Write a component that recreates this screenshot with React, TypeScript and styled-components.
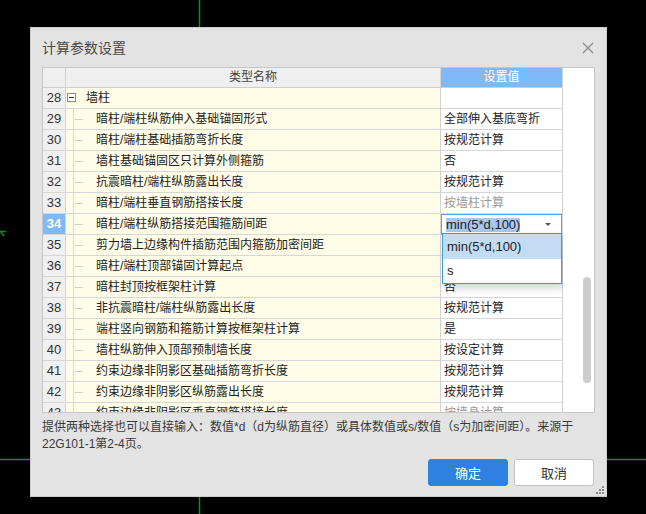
import React from "react";
import styled, { createGlobalStyle } from "styled-components";

const GlobalStyle = createGlobalStyle`
  html, body { margin: 0; padding: 0; background: #000; }
  body { font-family: "Liberation Sans", "Noto Sans CJK SC", sans-serif; }
`;

const FONT = `"Liberation Sans", "Noto Sans CJK SC", sans-serif`;

const Desktop = styled.div`
  position: relative;
  width: 646px;
  height: 514px;
  box-sizing: border-box;
  padding: 27px 0 0 30px;
  background: #000;
  overflow: hidden;
`;

const CanvasLines = styled.svg`
  position: absolute;
  left: 0;
  top: 0;
`;

const Dialog = styled.div`
  position: relative;
  width: 577px;
  height: 470px;
  box-sizing: border-box;
  background: #e3e3e3;
  border: 1px solid #cdcdcd;
  display: flex;
  flex-direction: column;
  padding: 0 12px 0 11px;
  font-family: ${FONT};
`;

const TitleBar = styled.div`
  height: 39px;
  display: flex;
  align-items: center;
  justify-content: space-between;
`;

const Title = styled.div`
  font-size: 14px;
  color: #4a4a4a;
  line-height: 20px;
`;

const CloseButton = styled.div`
  width: 12px;
  height: 12px;
  display: flex;
  align-items: center;
  justify-content: center;
`;

const Table = styled.div`
  width: 553px;
  height: 346px;
  box-sizing: border-box;
  border: 1px solid #c6c6c6;
  display: flex;
  background: #fff;
`;

const Grid = styled.div`
  width: 520px;
  display: flex;
  flex-direction: column;
`;

const HeaderRow = styled.div`
  display: flex;
  height: 20px;
  box-sizing: border-box;
  border-bottom: 1px solid #cfcfcf;
  font-size: 12px;
  line-height: 19px;
`;

const HeadCell = styled.div<{ $w: number; $accent?: boolean }>`
  width: ${(p) => p.$w}px;
  box-sizing: border-box;
  border-right: 1px solid #d2d2d2;
  background: ${(p) => (p.$accent ? "#80b9f7" : "#efefef")};
  color: ${(p) => (p.$accent ? "#ffffff" : "#444")};
  text-align: center;
`;

const Body = styled.div`
  flex: 1;
  overflow: hidden;
  position: relative;
`;

const Row = styled.div`
  display: flex;
  height: 21px;
  box-sizing: border-box;
  border-bottom: 1px solid #d6d6d6;
  font-size: 12px;
`;

const NumCell = styled.div<{ $active?: boolean }>`
  width: 23px;
  box-sizing: border-box;
  border-right: 1px solid #d2d2d2;
  background: ${(p) => (p.$active ? "#80b9f7" : "#f0f0f0")};
  color: ${(p) => (p.$active ? "#fff" : "#333")};
  font-weight: ${(p) => (p.$active ? "bold" : "normal")};
  font-size: 13px;
  line-height: 20px;
  text-align: center;
`;

const NameCell = styled.div`
  width: 375px;
  box-sizing: border-box;
  border-right: 1px solid #d2d2d2;
  background: #fffde7;
  display: flex;
  align-items: center;
  color: #222;
  line-height: 20px;
  white-space: nowrap;
`;

const Guide = styled.span`
  align-self: stretch;
  width: 30px;
  flex: none;
  background-image: linear-gradient(#d9d9d9, #d9d9d9), linear-gradient(#cfcfcf, #cfcfcf);
  background-repeat: no-repeat;
  background-size: 1px 100%, 8px 1px;
  background-position: 7px 0, 9px 10px;
`;

const Expander = styled.span`
  width: 9px;
  height: 9px;
  box-sizing: border-box;
  border: 1px solid #8a8a8a;
  margin: 0 10px 1px 1px;
  flex: none;
  display: flex;
  align-items: center;
  justify-content: center;
  background: #fff;
  &::before {
    content: "";
    width: 5px;
    height: 1px;
    background: #333;
  }
`;

const ValueCell = styled.div<{ $muted?: boolean }>`
  width: 122px;
  box-sizing: border-box;
  border-right: 1px solid #d2d2d2;
  background: #fff;
  color: ${(p) => (p.$muted ? "#9a9a9a" : "#222")};
  padding-left: 3px;
  line-height: 20px;
  white-space: nowrap;
  position: relative;
`;

const Combo = styled.div`
  position: absolute;
  left: 0;
  top: 0;
  right: 0;
  bottom: -1px;
  box-sizing: border-box;
  border: 1px solid #5ba5e2;
  background: #fff;
  display: flex;
  align-items: center;
  justify-content: space-between;
  padding: 0 10px 0 4px;
  z-index: 2;
`;

const ComboText = styled.span`
  font-size: 13px;
  line-height: 13px;
  padding: 0 0 1px;
  background: #a9c8ee;
  color: #1c1c1c;
`;

const Caret = styled.span`
  width: 0;
  height: 0;
  border-left: 3px solid transparent;
  border-right: 3px solid transparent;
  border-top: 3px solid #555;
`;

const DropList = styled.div`
  position: absolute;
  left: 1px;
  top: 19px;
  width: 120px;
  box-sizing: border-box;
  border: 1px solid #3b9bd4;
  background: #fff;
  box-shadow: 3px 4px 8px rgba(0, 0, 0, 0.18);
  z-index: 3;
`;

const DropItem = styled.div<{ $selected?: boolean }>`
  height: ${(p) => (p.$selected ? 25 : 24)}px;
  line-height: ${(p) => (p.$selected ? 25 : 24)}px;
  padding-left: 4px;
  font-size: 13px;
  color: #1c1c1c;
  background: ${(p) => (p.$selected ? "#c4dcf3" : "#fff")};
`;

const ScrollTrack = styled.div`
  flex: 1;
  background: #fff;
  display: flex;
  flex-direction: column;
`;

const Thumb = styled.div`
  width: 8px;
  height: 106px;
  margin: 209px 0 0 20px;
  border-radius: 4px;
  background: #cdcdcd;
`;

const Note = styled.div`
  margin-top: 6px;
  font-size: 12px;
  line-height: 17px;
  color: #3a3a3a;
  white-space: nowrap;
`;

const Buttons = styled.div`
  margin-top: 6px;
  display: flex;
  justify-content: flex-end;
  gap: 6px;
`;

const Button = styled.button<{ $primary?: boolean }>`
  width: 80px;
  height: 27px;
  box-sizing: border-box;
  border-radius: 3px;
  border: 1px solid ${(p) => (p.$primary ? "#2f80e0" : "#c4c4c4")};
  background: ${(p) => (p.$primary ? "#2f80e0" : "#ffffff")};
  color: ${(p) => (p.$primary ? "#ffffff" : "#333")};
  font-family: ${FONT};
  font-size: 13px;
  padding: 0;
`;

const Grip = styled.svg`
  position: absolute;
  right: 2px;
  bottom: 2px;
`;

type RowData = { n: number; name: string; value?: string; parent?: boolean; muted?: boolean; editing?: boolean };

const rows: RowData[] = [
  { n: 28, name: "墙柱", parent: true },
  { n: 29, name: "暗柱/端柱纵筋伸入基础锚固形式", value: "全部伸入基底弯折" },
  { n: 30, name: "暗柱/端柱基础插筋弯折长度", value: "按规范计算" },
  { n: 31, name: "墙柱基础锚固区只计算外侧箍筋", value: "否" },
  { n: 32, name: "抗震暗柱/端柱纵筋露出长度", value: "按规范计算" },
  { n: 33, name: "暗柱/端柱垂直钢筋搭接长度", value: "按墙柱计算", muted: true },
  { n: 34, name: "暗柱/端柱纵筋搭接范围箍筋间距", value: "min(5*d,100)", editing: true },
  { n: 35, name: "剪力墙上边缘构件插筋范围内箍筋加密间距", value: "min(5*d,100)" },
  { n: 36, name: "暗柱/端柱顶部锚固计算起点", value: "基础顶面" },
  { n: 37, name: "暗柱封顶按框架柱计算", value: "否" },
  { n: 38, name: "非抗震暗柱/端柱纵筋露出长度", value: "按规范计算" },
  { n: 39, name: "端柱竖向钢筋和箍筋计算按框架柱计算", value: "是" },
  { n: 40, name: "墙柱纵筋伸入顶部预制墙长度", value: "按设定计算" },
  { n: 41, name: "约束边缘非阴影区基础插筋弯折长度", value: "按规范计算" },
  { n: 42, name: "约束边缘非阴影区纵筋露出长度", value: "按规范计算" },
  { n: 43, name: "约束边缘非阴影区垂直钢筋搭接长度", value: "按墙身计算", muted: true },
  { n: 44, name: "约束边缘非阴影区箍筋", value: "按规范计算" },
];

export default function App() {
  return (
    <>
      <GlobalStyle />
      <Desktop>
        <CanvasLines width="646" height="514" viewBox="0 0 646 514">
          <line x1="199.5" y1="0" x2="199.5" y2="514" stroke="#129012" strokeWidth="1.5" />
          <line x1="0" y1="459.5" x2="646" y2="459.5" stroke="#129012" strokeWidth="1.5" />
          <polyline points="0,231.5 6,231.5" stroke="#129012" strokeWidth="1.5" fill="none" />
          <polyline points="1,232 4,236" stroke="#129012" strokeWidth="1.5" fill="none" />
        </CanvasLines>
        <Dialog>
          <TitleBar>
            <Title>计算参数设置</Title>
            <CloseButton>
              <svg width="12" height="12" viewBox="0 0 12 12">
                <path d="M1 1 L11 11 M11 1 L1 11" stroke="#8a8a8a" strokeWidth="1.2" />
              </svg>
            </CloseButton>
          </TitleBar>
          <Table>
            <Grid>
              <HeaderRow>
                <HeadCell $w={23} />
                <HeadCell $w={375}>类型名称</HeadCell>
                <HeadCell $w={122} $accent>
                  设置值
                </HeadCell>
              </HeaderRow>
              <Body>
                {rows.map((r) => (
                  <Row key={r.n}>
                    <NumCell $active={r.editing}>{r.n}</NumCell>
                    <NameCell>
                      {r.parent ? <Expander /> : <Guide />}
                      {r.name}
                    </NameCell>
                    <ValueCell $muted={r.muted}>
                      {r.editing ? (
                        <>
                          <Combo>
                            <ComboText>min(5*d,100)</ComboText>
                            <Caret />
                          </Combo>
                          <DropList>
                            <DropItem $selected>min(5*d,100)</DropItem>
                            <DropItem>s</DropItem>
                          </DropList>
                        </>
                      ) : (
                        r.value
                      )}
                    </ValueCell>
                  </Row>
                ))}
              </Body>
            </Grid>
            <ScrollTrack>
              <Thumb />
            </ScrollTrack>
          </Table>
          <Note>
            提供两种选择也可以直接输入：数值*d（d为纵筋直径）或具体数值或s/数值（s为加密间距）。来源于
            <br />
            22G101-1第2-4页。
          </Note>
          <Buttons>
            <Button $primary>确定</Button>
            <Button>取消</Button>
          </Buttons>
          <Grip width="9" height="9" viewBox="0 0 9 9">
            <rect x="7" y="1" width="2" height="2" fill="#8c8c8c" />
            <rect x="4" y="4" width="2" height="2" fill="#8c8c8c" />
            <rect x="7" y="4" width="2" height="2" fill="#8c8c8c" />
            <rect x="1" y="7" width="2" height="2" fill="#8c8c8c" />
            <rect x="4" y="7" width="2" height="2" fill="#8c8c8c" />
            <rect x="7" y="7" width="2" height="2" fill="#8c8c8c" />
          </Grip>
        </Dialog>
      </Desktop>
    </>
  );
}
